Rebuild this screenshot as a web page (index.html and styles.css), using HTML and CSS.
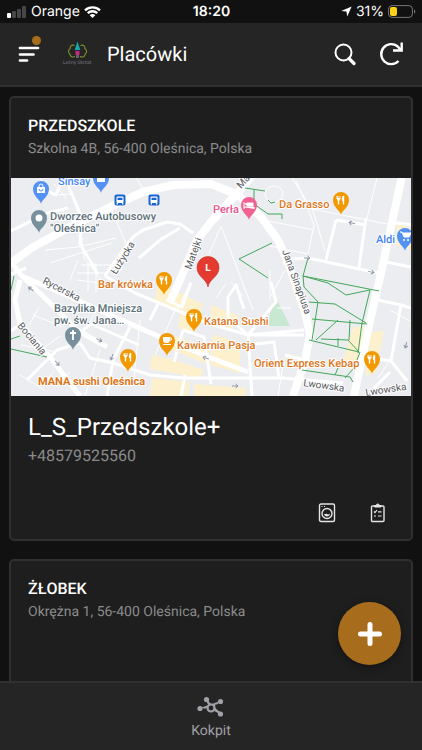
FILE: index.html
```html
<!DOCTYPE html>
<html lang="pl">
    <head>
        <meta charset="utf-8">
        <meta name="viewport" content="width=device-width, initial-scale=1">
        <title>Placówki</title>
        <link rel="stylesheet" href="styles.css">
    </head>
    <body>
        <div class="app">
            <div class="status">
                <div class="status-left">
                    <svg width="20" height="12" viewBox="0 0 20 12"><rect x="0" y="7" width="4" height="5" rx="1" fill="#fff"/><g fill="#474747"><rect x="5" y="5" width="4" height="7" rx="1"/><rect x="10" y="3" width="4" height="9" rx="1"/><rect x="15" y="0" width="4" height="12" rx="1"/></g></svg>
                    <span>Orange</span>
                    <svg width="17" height="12" viewBox="0 0 17 12" fill="none" stroke="#fff" stroke-width="2.3"><path d="M1 4.3C5.200.4 11.800.4 16 4.300M3.700 7.100c2.700-2.500 6.900-2.500 9.600 0"/><path d="M8.500 12L5.700 9.200c1.500-1.500 4.100-1.500 5.600 0z" fill="#fff" stroke="none"/></svg>
                </div>
                <b>18:20</b>
                <div class="status-right">
                    <svg width="11" height="11" viewBox="0 0 11 11"><path d="M10.600.4L6.300 10.600 5.400 5.600.3 4.900z" fill="#fff"/></svg>
                    <span>31%</span>
                    <svg width="28" height="13" viewBox="0 0 28 13"><rect x=".6" y=".6" width="23.800" height="11.800" rx="3.500" fill="none" stroke="#777"/><rect x="2" y="2" width="7" height="9" rx="2" fill="#fcd116"/><path d="M26 4.500c1.800.6 1.800 3.400 0 4z" fill="#777"/></svg>
                </div>
            </div>
            <header class="topbar">
                <button class="icon-btn menu" aria-label="Menu">
                    <svg width="22" height="18" viewBox="0 0 22 18" stroke="#fff" stroke-width="2.700" stroke-linecap="round"><path d="M2 3h18M2 9.500h13.500M2 15.500h7"/></svg>
                    <i class="dot"></i>
                </button>
                <svg class="logo" width="32" height="28" viewBox="0 0 32 28" role="img" aria-label="Leśny Skrzat">
                    <path d="M12.500 5.500C9.500 4.300 7.600 6.500 8.300 8.500c-2.300 1-2.300 4.600-.3 5.500-.3 2.700 3 3.600 5 2.400M18.500 5.500c3-1.200 5 1 4.300 3 2.300 1 2.300 4.600.3 5.500.3 2.700-3 3.600-5.100 2.400" fill="none" stroke="#7d9630" stroke-width="1.100"/>
                    <path d="M15.500 1.500L18.300 10h-5.600z" fill="#19a8ad"/><path d="M13.500 11h4v4h-4z" fill="#c52b78"/><path d="M14 15h3v3h-3z" fill="#66616b"/>
                    <text x="1" y="24">Leśny Skrzat</text>
                </svg>
                <h1>Placówki</h1>
                <button class="icon-btn" aria-label="Szukaj">
                    <svg width="24" height="24" viewBox="0 0 24 24" fill="none" stroke="#fff" stroke-width="2"><circle cx="10.500" cy="10.500" r="8"/><path d="M16 16.500l5 5" stroke-width="3.200" stroke-linecap="round"/></svg>
                </button>
                <button class="icon-btn" aria-label="Odśwież">
                    <svg width="26" height="26" viewBox="0 0 26 26" fill="none" stroke="#fff" stroke-width="2.400"><path d="M19.500 20A10 10 0 1 1 18.500 5.300L22 8.800"/><path d="M22.700 1.500v8H14"/></svg>
                </button>
            </header>
            <main class="content">
                <article class="card">
                    <div class="card-head">
                        <h2>PRZEDSZKOLE</h2>
                        <p>Szkolna 4B, 56-400 Oleśnica, Polska</p>
                    </div>
                    <svg class="map" viewBox="11 178 400 218" preserveAspectRatio="xMidYMid slice" role="img" aria-label="Mapa">
                        <defs>
                            <path id="pin" d="M0 15C-.7 10.500-8 7.500-8 0a8 8 0 0 1 16 0C8 7.500.7 10.500 0 15z"/>
                            <g id="fork" fill="#fff" stroke="#fff"><path d="M-3-4v3M-1-4v3M-4-4v3" stroke-width=".9"/><path d="M-4.500-2h4l-1 2.500h-2z" stroke="none"/><path d="M-2.500 0v4.500M2.500-4v8.500" stroke-width="1.400"/><path d="M2.500-4.500C1-3.500.5-1 1 1h1.500z" stroke="none"/></g>
                            <g id="bus"><rect x="-5.500" y="-5.500" width="11" height="11" rx="2" fill="#1a67d2"/><rect x="-3.500" y="-3.500" width="7" height="6.500" rx="1" fill="#fff"/><path d="M-2.500-2.300h5v2.400h-5z" fill="#1a67d2"/><path d="M-2.700 3v1.500M2.700 3v1.500" stroke="#fff" stroke-width="1.300"/></g>
                            <path id="arrow" d="M-3 0h6M.5-2L3 0 .5 2" fill="none" stroke="#8d98a8"/>
                        </defs>
                        <path d="M11 178h400v218H11z" fill="#ebedf0"/>
                        <!-- built-up areas -->
                        <g fill="#fdf1cd">
                            <path d="M158 284l27 11-7 17-24-10zM183 295l20 9-9 30-16-6zM152 355l22 5 30 10-4 8-50-9zM211 305l28 11-8 14-20-8zM175 336l35 12-3 16-35-14zM213 334l27 9v30l-30-8zM152 378l38 4-2 14h-38zM194 384l52 4v8h-52zM353 327h16l-5 46-22-7zM370 332l14-1-8 41-10 4zM397 223l14 6v21l-15-5z"/>
                        </g>
                        <path d="M276 298l14 28h-24c0-6 4-6 4-12z" fill="#c7e8d1"/>
                        <!-- footpaths and small streets -->
                        <g class="paths">
                            <path d="M66 178l13 35 5 45 20 25M54 184l12 14M40 178l12 17 20-1M136 178l10 15M110 206l18 42-7 23M45 250l33-3 38-9M50 263l37-12 25-8M78 260l-8 20M81 265h30M77 273h31M88 263v28M96 263v30M77 280l38 5M221 226l32 84M221 226l-12 28M270 246l38 8 6-29-8-22-10-22M258 219l56 11M292 178l20 31 80 16M377 178l-10 40M400 186l-9 38M311 204l14 47M270 270v30M277 308h14M285 270l-14 26M226 284l-10 14M231 282l12 14M33 315l30 12M39 307l-10 18M21 345l35 7M60 336l-27 20M20 375l24 15M45 383l9-12M190 282l-13 30M175 310l-20 45M140 320l-6 58M100 304l-10 18M100 350l-15 46M56 386l14-14M283 365l-5 31M390 310l22 12M378 378l15-22"/>
                            <ellipse cx="274" cy="194" rx="9" ry="8"/>
                        </g>
                        <g class="streets">
                            <path d="M105 276l5-8 23-31 10-7 24-8 13 2 13 9M139 258l21-18 20-12M105 276l30 17 75 31 38 11h56M336 220l30 5M336 220l-10 40M366 218l-7 49M283 264l10-5 15-1 70 15M386 262l25 5M412 225l-22-3M66 180l15 36-1 28 18 30M11 231l37-18 20-5M22 276l25 10M27 380l30-30 23-7 10 15 23 5 37 12 33 3h100l60 5M130 327l-17 33-6 36M83 330l8-6 48 21M62 180l-6 15-18-9M248 335l4 61M248 335l-20-18v-20l8-12 8 24M304 330l-56 5M271 282l5 20-28 33M183 330l-9 32M183 330l21 7 7 47M150 320l8-16M166 300l16 7 9-24M181 396l4-21M248 345l26-3 5 36M378 300l23 5 10 3M401 305l-10 56-13-2M391 361l16 20M374 388l16-16M285 355l16 4M11 274l15-6M22 323l-11 8"/>
                        </g>
                        <g class="roads">
                            <path d="M11 263l22-16 37-20 40-20 33-15 30-7 38-1 27 11 23 22 17 23 10 22 17 50 5 23-5 25-12 36"/>
                            <path d="M252 176l-21 24-20 22-14 18-17 40-10 22"/>
                            <path d="M402 176l-11 51-10 46-13 57-14 66"/>
                        </g>
                        <g class="streets main">
                            <path d="M11 262l11 14 28 27 27 27 30 17M22 276l53 23 35 16 50 22 51 21 37 14M20 280l-5 20 5 23 30 34 23 30 7 9"/>
                        </g>
                        <!-- park and walking routes -->
                        <g class="green">
                            <path d="M245 188l20 3M254 190v14l14 10h14v5M268 200l3 3 4-1M272 243l-33 16 29 19M308 258l-5 18 1 11 14 15-6 38M303 276l76 15M303 276l25 7 18 12 24-5M370 290l-8 33-4 30M309 302l26 2 31 19M312 319l55 5M338 320l-22 20M350 320l-1 20M309 340l50 12M321 339l27 1 11 12M338 338v8M360 352l-6 16-9 10M302 370l48 7 3 5M338 368l-3 7M11 290l3-14M11 349l36 8M11 339l9-3"/>
                        </g>
                        <use href="#arrow" x="31" y="289" transform="rotate(215 31 289)"/><use href="#arrow" x="99" y="340" transform="rotate(28 99 340)"/><use href="#arrow" x="57" y="363" transform="rotate(50 57 363)"/><use href="#arrow" x="112" y="357" transform="rotate(110 112 357)"/><use href="#arrow" x="235" y="386"/><use href="#arrow" x="307" y="258"/><use href="#arrow" x="352" y="223" transform="rotate(190 352 223)"/><use href="#arrow" x="371" y="272" transform="rotate(12 371 272)"/><use href="#arrow" x="406" y="345" transform="rotate(105 406 345)"/><use href="#arrow" x="206" y="358" transform="rotate(200 206 358)"/>
                        <!-- street names -->
                        <g class="street-name">
                            <text transform="translate(116 275) rotate(-58)">Łużycka</text>
                            <text transform="translate(191 270) rotate(-70)">Matejki</text>
                            <text transform="translate(241 189) rotate(-48)">Matejki</text>
                            <text transform="translate(42 283) rotate(27)">Rycerska</text>
                            <text transform="translate(17 326) rotate(50)">Bociania</text>
                            <text transform="translate(282 251) rotate(70)">Jana Sinapiusa</text>
                            <text transform="translate(303 386) rotate(8)">Lwowska</text>
                            <text transform="translate(366 396) rotate(-9)">Lwowska</text>
                        </g>
                        <g fill="#5491f5"><use href="#pin" x="41" y="189"/><use href="#pin" x="101" y="178"/><use href="#pin" x="405" y="236"/></g>
                        <g fill="#78909c"><use href="#pin" x="39" y="218"/><use href="#pin" x="73" y="335"/></g>
                        <circle cx="39" cy="218" r="3.500" fill="#fff"/>
                        <path d="M73 330v10M70 333h6" stroke="#fff" stroke-width="1.800"/>
                        <path d="M37 187h8v6h-8zM97 176h8v6h-8z" fill="#fff"/><path d="M39 188v-2a2 2 0 0 1 4 0v2" fill="none" stroke="#fff"/><path d="M39 189a2 2 0 0 0 4 0" fill="none" stroke="#5491f5"/>
                        <path d="M400 232h2l2 5h5l2-4h-8" fill="#fff" stroke="#fff"/><g fill="#fff"><circle cx="404" cy="240" r="1"/><circle cx="408" cy="240" r="1"/></g>
                        <use href="#bus" x="120" y="200"/><use href="#bus" x="154" y="200"/>
                        <use href="#pin" x="249" y="205" fill="#f06292"/><path d="M244 202v7M244 207h10v2M247 206v-3h6v3z" fill="#fff" stroke="#fff"/><circle cx="246" cy="204" r="1" fill="#fff"/>
                        <g fill="#f29900"><use href="#pin" x="341" y="200"/><use href="#pin" x="164" y="280"/><use href="#pin" x="194" y="317"/><use href="#pin" x="167" y="341"/><use href="#pin" x="128" y="357"/><use href="#pin" x="372" y="359"/></g>
                        <use href="#fork" x="341" y="200"/><use href="#fork" x="164" y="280"/><use href="#fork" x="194" y="317"/><use href="#fork" x="128" y="357"/><use href="#fork" x="372" y="359"/>
                        <path d="M163 337h7v3a3 3 0 0 1-3 3h-1a3 3 0 0 1-3-3zM163 344h8v1h-8z" fill="#fff"/><path d="M170 338h1.500v2H170" fill="none" stroke="#fff"/>
                        <g class="place shop"><text x="58" y="185">Sinsay</text><text x="376" y="243">Aldi</text></g>
                        <g class="place gray"><text x="50" y="220">Dworzec Autobusowy</text><text x="50" y="232">"Oleśnica"</text><text x="54" y="312">Bazylika Mniejsza</text><text x="54" y="324">pw. św. Jana…</text></g>
                        <g class="place food"><text x="279" y="208">Da Grasso</text><text x="98" y="288">Bar krówka</text><text x="204" y="325">Katana Sushi</text><text x="177" y="349">Kawiarnia Pasja</text><text x="254" y="367">Orient Express Kebap</text><text x="38" y="385" class="strong">MANA sushi Oleśnica</text></g>
                        <text x="213" y="213" class="place hotel">Perła</text>
                        <path d="M208 287C207 279 197 277 197 267.500a11 11 0 0 1 22 0C219 277 209 279 208 287z" fill="#e53a30" stroke="#c62b27" stroke-width=".6"/>
                        <text x="208" y="271" class="marker">L</text>
                    </svg>
                    <div class="card-body">
                        <h3>L_S_Przedszkole+</h3>
                        <p>+48579525560</p>
                        <div class="actions">
                            <button aria-label="Pranie">
                                <svg width="18" height="20" viewBox="0 0 18 20" fill="none" stroke="#e4e4e4"><rect x="1.500" y="1" width="15" height="17.500" rx="1.500" stroke-width="1.400"/><circle cx="9" cy="10.500" r="5" stroke-width="1.400"/><path d="M6 10.500c1.200 1.400 1.800-.2 3 .5s1.900.4 3-.5c0 4-6 4-6 0z" fill="#e4e4e4" stroke="none"/><path d="M3.500 3.500h1M6 3.500h1"/></svg>
                            </button>
                            <button aria-label="Lista">
                                <svg width="16" height="20" viewBox="0 0 16 20" fill="none" stroke="#e4e4e4"><rect x="1.500" y="3" width="12.500" height="15.500" rx="1" stroke-width="1.400"/><path d="M4.500 4V2.500h1.800a1.500 1.500 0 0 1 3 0H11V4z" fill="#e4e4e4"/><path d="M4 8.500l1 1 2-2.500M8 8.800h3.500M4 13h2M8 13h3.500" stroke-width="1.200"/></svg>
                            </button>
                        </div>
                    </div>
                </article>
                <article class="card">
                    <div class="card-head">
                        <h2>ŻŁOBEK</h2>
                        <p>Okrężna 1, 56-400 Oleśnica, Polska</p>
                    </div>
                    <div class="card-body"></div>
                </article>
            </main>
            <nav class="tabbar">
                <button class="fab" aria-label="Dodaj">
                    <svg width="24" height="24" viewBox="0 0 24 24" stroke="#fff" stroke-width="5" stroke-linecap="round"><path d="M2.500 12h19M12 2.500v19"/></svg>
                </button>
                <a href="#kokpit">
                    <svg width="28" height="22" viewBox="0 0 28 22" fill="#a1a1a8" stroke="#a1a1a8"><path d="M9.500 3.500l4.500 8.500 10 5.500" stroke-width="2"/><path d="M3 12h11l9.500-7" stroke-width="1.500" stroke-dasharray="2 1.500"/><g stroke="none"><circle cx="9.500" cy="3.500" r="2.600"/><circle cx="3" cy="12.500" r="2.600"/><circle cx="23.500" cy="5.500" r="2.600"/><circle cx="23.500" cy="18" r="2.600"/></g><circle cx="14" cy="12" r="3.500" fill="#252525" stroke-width="2.200"/></svg>
                    <span>Kokpit</span>
                </a>
            </nav>
        </div>
    </body>
</html>
```

FILE: styles.css
```css
*{margin:0;padding:0;box-sizing:border-box;}
html,body{height:100%;}
body{background:#111;color:#fff;font-family:Roboto,sans-serif;text-rendering:geometricPrecision;}
button{background:none;border:0;color:inherit;font:inherit;cursor:pointer;}
svg{display:block;flex-shrink:0;}
.app{display:flex;flex-direction:column;height:100vh;overflow:hidden;}

.status{display:grid;grid-template-columns:1fr auto 1fr;align-items:center;height:23px;padding:0 6px 0 7px;font:14px/20px Inter,sans-serif;flex-shrink:0;}
.status b{font-weight:600;}
.status-left,.status-right{display:flex;align-items:center;gap:4px;}
.status-right{justify-content:flex-end;}

.topbar{display:flex;align-items:center;height:64px;padding:0 17px 0 18px;background:#252525;border-bottom:2px solid #2f2f32;flex-shrink:0;}
.topbar h1{flex:1;margin-left:13px;font-size:20px;line-height:28px;font-weight:400;}
.icon-btn{position:relative;}
.icon-btn + .icon-btn{margin-left:22px;}
.menu{margin-right:22px;}
.dot{position:absolute;top:-9px;right:-1px;width:9px;height:9px;border-radius:50%;background:#a86d1c;}
.logo text{font-size:5px;fill:#77747e;}

.content{flex:1;min-height:0;overflow:hidden;padding:9px 9px 0;}
.card{background:#1e1e1e;border:2px solid #303032;border-radius:5px;margin-bottom:18px;overflow:hidden;}
.card-head{padding:17px 18px 19px 17px;}
.card-head h2{font-size:16px;line-height:22px;font-weight:500;}
.card-head p{font-size:14px;line-height:20px;margin-top:2px;color:#8b8b8b;}
.card-body{min-height:143px;padding:14px 25px 15px 17px;}
.card-body h3{font-size:24px;line-height:34px;font-weight:400;}
.card-body p{font-size:16px;line-height:24px;color:#8b8b8b;}
.actions{display:flex;justify-content:flex-end;gap:34px;margin-top:35px;}

.map{width:100%;height:218px;font-family:Roboto,sans-serif;}
.paths,.streets,.roads,.green{fill:none;stroke:#fff;stroke-linejoin:round;}
.paths{stroke-width:1px;}
.streets{stroke-width:3px;}
.main{stroke-width:5px;}
.roads{stroke-width:8px;}
.green{stroke:#43a85b;stroke-width:1px;}
.street-name,.place{stroke:#fff;stroke-width:2px;paint-order:stroke;stroke-linejoin:round;}
.street-name{font-size:10px;fill:#55585d;}
.place{font-size:11px;font-weight:500;}
.shop{fill:#4285f4;}
.gray{fill:#5c6f7a;}
.food{fill:#dc7619;}
.hotel{fill:#e5548a;}
.strong{font-weight:700;}
.marker{font-size:10px;font-weight:700;fill:#fff;text-anchor:middle;}

.tabbar{position:relative;display:flex;justify-content:center;height:69px;padding-top:13px;background:#252525;border-top:2px solid #303032;flex-shrink:0;}
.tabbar a{display:flex;flex-direction:column;align-items:center;gap:3px;color:#a1a1a8;font-size:14px;line-height:20px;text-decoration:none;}
.fab{position:absolute;right:21px;bottom:85px;display:flex;align-items:center;justify-content:center;width:63px;height:63px;border-radius:50%;background:#a86d1c;box-shadow:0 2px 8px rgba(0,0,0,.4);}
```
